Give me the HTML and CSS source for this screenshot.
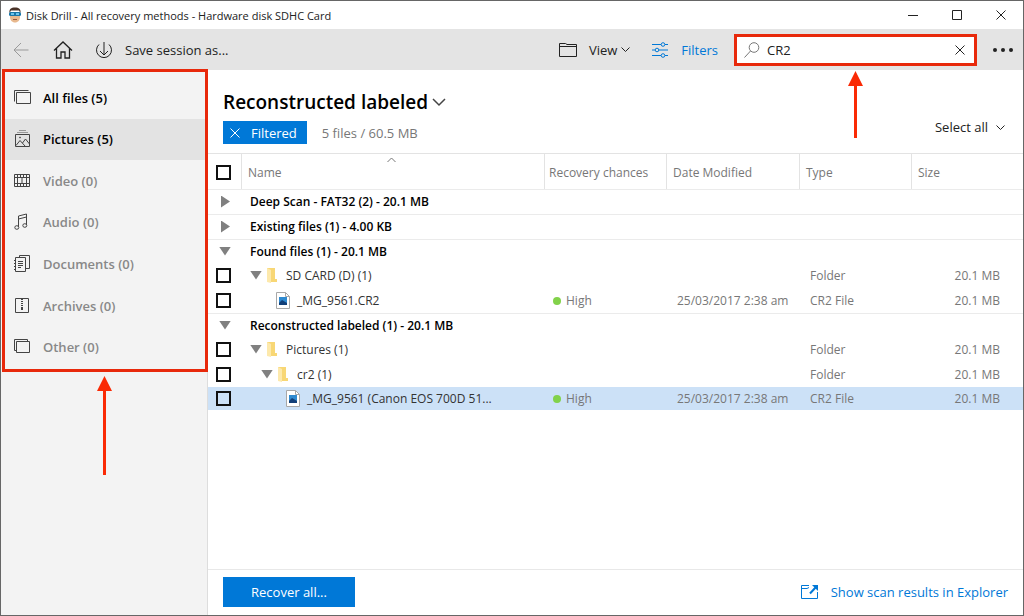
FILE: index.html
```html
<!DOCTYPE html>
<html lang="en">
<head>
    <meta charset="UTF-8">
    <meta name="viewport" content="width=device-width, initial-scale=1.0">
    <title>Disk Drill</title>
    <link rel="stylesheet" href="styles.css">
</head>
<body>
    <div class="window">
        <header class="titlebar">
            <svg class="logo" width="12" height="16" viewBox="0 0 12 16">
                <path d="M1 5h10v5c0 3-2 5.500-5 5.500S1 13 1 10z" fill="#e8b88d"/>
                <path d="M.5 6C0 2 2 .5 6 .5S12 2 11.500 6L10 3.500H2z" fill="#4a3328"/>
                <rect x="0" y="5" width="12" height="4" rx="1.500" fill="#1976a8"/>
                <path d="M2 6h3v2H2zM7 6h3v2H7z" fill="#6cc3ea"/>
                <path d="M4 12.500h4" stroke="#9a5a3c"/>
            </svg>
            <h1 class="window-title">Disk Drill - All recovery methods - Hardware disk SDHC Card</h1>
            <div class="window-buttons">
                <button aria-label="Minimize"><svg width="10" height="10"><path d="M0 5.500h10"/></svg></button>
                <button aria-label="Maximize"><svg width="10" height="10"><path d="M.5.5h9v9h-9z"/></svg></button>
                <button aria-label="Close"><svg width="10" height="10"><path d="M.5.5l9 9M9.500.5l-9 9"/></svg></button>
            </div>
        </header>

        <div class="toolbar">
            <button class="back" aria-label="Back"><svg width="16" height="16"><path d="M15.500 8H1M8 1L1 8l7 7"/></svg></button>
            <button class="home" aria-label="Home"><svg width="20" height="18" stroke-width="1.300"><path d="M1 9.500L10 1l9 8.500M3.500 7.500V17H8v-6h4v6h4.500V7.500"/></svg></button>
            <button class="save">
                <svg width="18" height="18"><path d="M4 3.500A7.500 7.500 0 1 0 14 3.500M9 1v13M5 10l4 4 4-4"/></svg>
                <span>Save session as...</span>
            </button>
            <button class="view">
                <svg width="18" height="16"><path d="M.5 14.500v-13h6l1.500 1h9.500v12zM.5 4.500h17"/></svg>
                <span>View</span>
                <svg class="chevron" width="9" height="9"><path d="M.5 2.500l4 4 4-4"/></svg>
            </button>
            <button class="filters">
                <svg width="16" height="16"><path d="M0 2.500h9M13 2.500h3M0 8h3M7 8h9M0 13.500h9M13 13.500h3"/><circle cx="11" cy="2.500" r="1.800"/><circle cx="5" cy="8" r="1.800"/><circle cx="11" cy="13.500" r="1.800"/></svg>
                <span>Filters</span>
            </button>
            <div class="search">
                <svg class="search-icon" width="16" height="16"><circle cx="10" cy="5.500" r="4.800"/><path d="M6.500 9L.5 15.500"/></svg>
                <input type="text" value="CR2" aria-label="Search">
                <button aria-label="Clear search"><svg width="10" height="10"><path d="M.5.5l9 9M9.500.5l-9 9"/></svg></button>
                <svg class="arrow search-arrow" width="15" height="67"><path d="M7.500 0L15 15H9v52H6V15H0z"/></svg>
            </div>
            <button class="more" aria-label="More"><svg width="20" height="4"><circle cx="2" cy="2" r="2"/><circle cx="10" cy="2" r="2"/><circle cx="18" cy="2" r="2"/></svg></button>
        </div>

        <div class="body">
            <aside class="sidebar">
                <nav class="categories">
                    <a href="#all"><svg width="18" height="18"><path d="M2.500 3.500h14v11h-14zM.5 12.500v-11h14"/></svg>All files (5)</a>
                    <a href="#pictures" class="active"><svg width="18" height="18"><path d="M1.500 4.500h14v12h-14zM2 15.500l4-5 5 5.500M8.500 13l3-4 4 5"/><path d="M3 2.500h11M5 .5h7" stroke="#999"/><circle cx="6" cy="7.500" r=".5"/></svg>Pictures (5)</a>
                    <a href="#video" class="empty"><svg width="18" height="18"><path d="M.5 2.500h15v12H.5zM.5 5.500h15M.5 11.500h15M8 5.500v6M3.500 5.500v6M12.500 5.500v6M3.500 2.500v3M6.500 2.500v3M9.500 2.500v3M12.500 2.500v3M3.500 11.500v3M6.500 11.500v3M9.500 11.500v3M12.500 11.500v3"/></svg>Video (0)</a>
                    <a href="#audio" class="empty"><svg width="18" height="18"><path d="M4.500 14V3l8-2v11M4.500 6l8-2"/><ellipse cx="2.800" cy="14.500" rx="2" ry="1.800"/><ellipse cx="10.800" cy="12.500" rx="2" ry="1.800"/></svg>Audio (0)</a>
                    <a href="#documents" class="empty"><svg width="18" height="18"><path d="M5.500 2.500v-2h10v13h-4M1.500 2.500h10v14h-10zM0 5.500h2M0 8.500h2M0 11.500h2M0 14.500h2M4 6.500h5M4 8.500h5M4 10.500h5M4 12.500h3"/></svg>Documents (0)</a>
                    <a href="#archives" class="empty"><svg width="18" height="18"><path d="M1.500 1.500h13v14h-13z"/><path d="M8 2v8" stroke-dasharray="1 1" stroke-width="2"/><path d="M8 10v3" stroke-width="2"/></svg>Archives (0)</a>
                    <a href="#other" class="empty"><svg width="18" height="18"><path d="M2.500 3.500h13v11h-13zM2.500 12.500H.5v-11h13v2"/></svg>Other (0)</a>
                    <svg class="arrow categories-arrow" width="15" height="99"><path d="M7.500 0L15 15H9v84H6V15H0z"/></svg>
                </nav>
            </aside>

            <main class="main">
                <div class="summary">
                    <div class="summary-info">
                        <h2><button class="heading">Reconstructed labeled <svg width="14" height="9" stroke-width="1.500"><path d="M1 1l6 6 6-6"/></svg></button></h2>
                        <div class="filter-line">
                            <button class="filtered"><svg width="10" height="10"><path d="M.5.5l9 9M9.500.5l-9 9"/></svg>Filtered</button>
                            <span>5 files / 60.5 MB</span>
                        </div>
                    </div>
                    <button class="select-all">Select all <svg width="9" height="9"><path d="M.5 2.500l4 4 4-4"/></svg></button>
                </div>

                <div class="list">
                    <table class="files">
                        <colgroup>
                            <col class="col-check"><col><col class="col-chances"><col class="col-date"><col class="col-type"><col class="col-size">
                        </colgroup>
                        <thead>
                            <tr>
                                <th><input type="checkbox" aria-label="Select everything"></th>
                                <th class="sorted">Name<svg class="sort" width="9" height="6"><path d="M.5 5l4-4 4 4"/></svg></th>
                                <th>Recovery chances</th>
                                <th>Date Modified</th>
                                <th>Type</th>
                                <th>Size</th>
                            </tr>
                        </thead>
                        <tbody>
                            <tr class="group">
                                <td><button class="toggle closed" aria-label="Expand"></button></td>
                                <td colspan="5">Deep Scan - FAT32 (2) - 20.1 MB</td>
                            </tr>
                            <tr class="group">
                                <td><button class="toggle closed" aria-label="Expand"></button></td>
                                <td colspan="5">Existing files (1) - 4.00 KB</td>
                            </tr>
                            <tr class="group">
                                <td><button class="toggle" aria-label="Collapse"></button></td>
                                <td colspan="5">Found files (1) - 20.1 MB</td>
                            </tr>
                            <tr>
                                <td><input type="checkbox" aria-label="SD CARD (D)"></td>
                                <td><div class="name folder"><button class="toggle" aria-label="Collapse"></button><svg width="12" height="16"><path d="M1 1h8v11h2v3H1z" fill="#f8d775"/><path d="M1 1l4 2v13l-4-1z" fill="#fde9ac"/></svg>SD CARD (D) (1)</div></td>
                                <td></td>
                                <td></td>
                                <td>Folder</td>
                                <td>20.1 MB</td>
                            </tr>
                            <tr>
                                <td><input type="checkbox" aria-label="_MG_9561.CR2"></td>
                                <td><div class="name file"><svg width="14" height="17"><path d="M.5.5h9l4 4v12H.5z" fill="#fff" stroke="#a8a8a8"/><path d="M9.500.5v4h4" stroke="#a8a8a8"/><path d="M3 5h8v8H3z" fill="#2f8ad0" stroke="none"/><path d="M3 13v-2l3-3 5 3v2z" fill="#123f78" stroke="none"/></svg>_MG_9561.CR2</div></td>
                                <td><span class="high">High</span></td>
                                <td>25/03/2017 2:38 am</td>
                                <td>CR2 File</td>
                                <td>20.1 MB</td>
                            </tr>
                            <tr class="group">
                                <td><button class="toggle" aria-label="Collapse"></button></td>
                                <td colspan="5">Reconstructed labeled (1) - 20.1 MB</td>
                            </tr>
                            <tr>
                                <td><input type="checkbox" aria-label="Pictures"></td>
                                <td><div class="name folder"><button class="toggle" aria-label="Collapse"></button><svg width="12" height="16"><path d="M1 1h8v11h2v3H1z" fill="#f8d775"/><path d="M1 1l4 2v13l-4-1z" fill="#fde9ac"/></svg>Pictures (1)</div></td>
                                <td></td>
                                <td></td>
                                <td>Folder</td>
                                <td>20.1 MB</td>
                            </tr>
                            <tr>
                                <td><input type="checkbox" aria-label="cr2"></td>
                                <td><div class="name folder nested"><button class="toggle" aria-label="Collapse"></button><svg width="12" height="16"><path d="M1 1h8v11h2v3H1z" fill="#f8d775"/><path d="M1 1l4 2v13l-4-1z" fill="#fde9ac"/></svg>cr2 (1)</div></td>
                                <td></td>
                                <td></td>
                                <td>Folder</td>
                                <td>20.1 MB</td>
                            </tr>
                            <tr class="selected">
                                <td><input type="checkbox" aria-label="_MG_9561 (Canon EOS 700D)"></td>
                                <td><div class="name file nested"><svg width="14" height="17"><path d="M.5.5h9l4 4v12H.5z" fill="#fff" stroke="#a8a8a8"/><path d="M9.500.5v4h4" stroke="#a8a8a8"/><path d="M3 5h8v8H3z" fill="#2f8ad0" stroke="none"/><path d="M3 13v-2l3-3 5 3v2z" fill="#123f78" stroke="none"/></svg>_MG_9561 (Canon EOS 700D 51...</div></td>
                                <td><span class="high">High</span></td>
                                <td>25/03/2017 2:38 am</td>
                                <td>CR2 File</td>
                                <td>20.1 MB</td>
                            </tr>
                        </tbody>
                    </table>
                </div>

                <footer class="footer">
                    <button class="recover">Recover all...</button>
                    <a href="#explorer" class="explorer">
                        <svg width="18" height="16"><path d="M8 1.500H.5v13h16V8M.5 4.500H6l2-1"/><path d="M9 9.500L15 3" stroke-width="2"/><path d="M11 1h6v6z" fill="#0078d7" stroke="none"/></svg>
                        Show scan results in Explorer
                    </a>
                </footer>
            </main>
        </div>
    </div>
</body>
</html>
```

FILE: styles.css
```css
* {
    box-sizing: border-box;
    margin: 0;
    padding: 0;
}

body {
    font-family: "Open Sans", "Noto Sans", sans-serif;
    font-size: 13px;
    color: #222;
}

button {
    font: inherit;
    color: inherit;
    background: none;
    border: none;
    display: flex;
    align-items: center;
}

a {
    text-decoration: none;
}

svg {
    fill: none;
    stroke: currentColor;
    flex-shrink: 0;
}

.window {
    display: flex;
    flex-direction: column;
    min-height: 100vh;
    border: 1px solid #666;
    background: #fff;
}

/* Title bar */
.titlebar {
    display: flex;
    align-items: center;
    height: 28px;
    padding-left: 8px;
}

.logo {
    stroke: none;
}

.window-title {
    flex: 1;
    margin-left: 5px;
    font-size: 11px;
    font-weight: 400;
}

.window-buttons {
    display: flex;
}

.window-buttons button {
    width: 44px;
    height: 28px;
    justify-content: center;
}

/* Toolbar */
.toolbar {
    display: flex;
    align-items: center;
    height: 41px;
    padding: 0 10px 0 12px;
    background: #e4e4e4;
}

.back {
    color: #999;
}

.home {
    margin-left: 24px;
}

.save {
    margin-left: 22px;
    gap: 12px;
}

.view {
    margin-left: auto;
    gap: 12px;
}

.view .chevron {
    margin-left: -8px;
}

.filters {
    margin-left: 22px;
    gap: 13px;
    color: #0078d7;
}

.search {
    position: relative;
    display: flex;
    align-items: center;
    width: 243px;
    height: 32px;
    margin-left: 16px;
    padding: 0 9px 0 7px;
    background: #fff;
    border: 3px solid #e8290b;
}

.search-icon {
    color: #777;
}

.search input {
    flex: 1;
    min-width: 0;
    margin-left: 7px;
    border: none;
    outline: none;
    font: inherit;
    color: #222;
}

.more {
    margin-left: 16px;
}

.more svg {
    fill: #222;
    stroke: none;
}

/* Red arrows under the highlighted areas */
.arrow {
    position: absolute;
    fill: #fa2a05;
    stroke: none;
}

.search-arrow {
    top: 34px;
    left: 111px;
}

.categories-arrow {
    top: 100%;
    left: 92px;
    margin-top: 7px;
}

/* Sidebar */
.body {
    flex: 1;
    display: flex;
}

.sidebar {
    width: 207px;
    background: #f3f3f3;
    border-right: 1px solid #ddd;
}

.categories {
    position: relative;
    display: grid;
    grid-auto-rows: 1fr;
    min-height: 303px;
    margin: -1px -1px 0 1px;
    padding: 5px 0 1px;
    border: 3px solid #e8290b;
}

.categories a {
    display: flex;
    align-items: center;
    gap: 11px;
    padding-left: 9px;
    font-weight: 600;
    color: #000;
}

.categories svg:not(.arrow) {
    color: #444;
}

.categories .active {
    background: #e3e3e3;
}

.categories .empty {
    color: #888;
}

/* Heading above the list */
.main {
    flex: 1;
    display: flex;
    flex-direction: column;
    min-width: 0;
}

.summary {
    display: flex;
    justify-content: space-between;
    align-items: flex-end;
    padding: 18px 18px 9px 15px;
}

.heading {
    gap: 4px;
    font-size: 19px;
    line-height: 28px;
    font-weight: 600;
    color: #000;
}

.heading svg {
    color: #444;
}

.filter-line {
    display: flex;
    align-items: center;
    gap: 15px;
    margin-top: 5px;
    color: #777;
}

.filtered {
    gap: 11px;
    height: 23px;
    padding: 0 10px 0 7px;
    background: #0078d7;
    color: #fff;
}

.select-all {
    gap: 8px;
    margin-bottom: 8px;
}

/* File list */
.list {
    flex: 1;
}

.files {
    width: 100%;
    table-layout: fixed;
    border-collapse: separate;
    border-spacing: 0;
    font-size: 12px;
    color: #777;
}

.col-check {
    width: 34px;
}

.col-chances {
    width: 122px;
}

.col-date {
    width: 133px;
}

.col-type {
    width: 112px;
}

.col-size {
    width: 111px;
}

.files th {
    height: 36px;
    padding: 2px 5px 0 6px;
    border-top: 1px solid #e3e3e3;
    border-right: 1px solid #e3e3e3;
    font-weight: 400;
    text-align: left;
    white-space: nowrap;
}

.files th:first-child {
    padding-left: 8px;
}

.files th:nth-child(3) {
    padding-left: 4px;
}

.files th:last-child {
    border-right: none;
}

.sorted {
    position: relative;
}

.sort {
    position: absolute;
    top: 3px;
    left: 48%;
}

.files td {
    height: 25px;
    padding: 0 0 1px 8px;
    white-space: nowrap;
}

.files td:nth-child(4),
.files td:nth-child(5) {
    padding-left: 10px;
}

.files td:last-child:not([colspan]) {
    padding-right: 23px;
    text-align: right;
}

.files .group td {
    height: 24px;
    border-top: 1px solid #ebebeb;
    font-weight: 600;
    color: #000;
}

.files .group:nth-child(-n+2) td {
    height: 25px;
}

.selected {
    background: #cce1f7;
}

.files .selected td {
    height: 23px;
}

input[type="checkbox"] {
    appearance: none;
    display: block;
    width: 15px;
    height: 15px;
    border: 2px solid #111;
}

.toggle {
    width: 12px;
    height: 9px;
    background: #808080;
    clip-path: polygon(0 0, 100% 0, 50% 100%);
}

.toggle.closed {
    width: 9px;
    height: 12px;
    clip-path: polygon(0 0, 100% 50%, 0 100%);
}

.group .toggle {
    margin-left: 3px;
}

.group .toggle.closed {
    margin-left: 5px;
}

.name {
    display: flex;
    align-items: center;
    color: #333;
}

.name.folder svg {
    stroke: none;
    margin: 0 8px 0 4px;
}

.name.nested {
    padding-left: 11px;
}

.name.file {
    gap: 7px;
    padding-left: 26px;
}

.name.file.nested {
    padding-left: 36px;
}

.high::before {
    content: "";
    display: inline-block;
    width: 8px;
    height: 8px;
    margin-right: 5px;
    border-radius: 50%;
    background: #82d24a;
}

/* Footer */
.footer {
    display: flex;
    justify-content: space-between;
    align-items: center;
    padding: 7px 15px 8px;
    border-top: 1px solid #e8e8e8;
}

.recover {
    width: 132px;
    height: 30px;
    justify-content: center;
    background: #0078d7;
    color: #fff;
}

.explorer {
    display: flex;
    align-items: center;
    gap: 12px;
    color: #0078d7;
}
```
